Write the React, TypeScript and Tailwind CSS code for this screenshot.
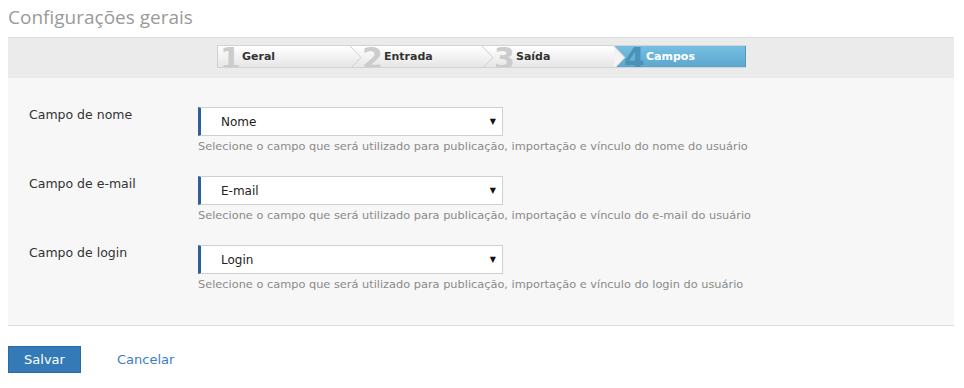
const steps = [
  { n: "1", label: "Geral" },
  { n: "2", label: "Entrada" },
  { n: "3", label: "Saída" },
];

const fields = [
  { label: "Campo de nome", value: "Nome", what: "nome" },
  { label: "Campo de e-mail", value: "E-mail", what: "e-mail" },
  { label: "Campo de login", value: "Login", what: "login" },
];

function Chevron({ active }: { active?: boolean }) {
  return (
    <div
      className={
        active
          ? "h-full w-[12px] shrink-0 bg-gradient-to-b from-[#76bfe2] to-[#5ca7cf]"
          : "h-full w-[12px] shrink-0 bg-gradient-to-b from-[#ffffff] to-[#e6e6e6]"
      }
    >
      <svg width="12" height="23" viewBox="0 0 12 23" className="block">
        {active && <polygon points="0,0 11,11.5 0,23" fill="#f3f3f3" />}
        <polyline points="0,0 11,11.5 0,23" fill="none" stroke="#cfcfcf" strokeWidth="1" />
      </svg>
    </div>
  );
}

export default function App() {
  return (
    <div className="w-[964px] h-[388px] bg-white pl-2 pr-[10px] font-['DejaVu_Sans',sans-serif]">
      <div className="h-[37px] pt-[4px] text-[19px] leading-[26px] text-[#9a9a9a] font-['Open_Sans',sans-serif]">
        Configurações gerais
      </div>

      <div className="border-t border-[#dcdcdc] bg-[#ebebeb] pt-[7px] pb-[10px] flex justify-start pl-[209px]">
        <div className="flex h-[23px] border-y border-[#d3d3d3] overflow-hidden">
          {steps.map((s, i) => (
            <div key={s.n} className="flex h-full">
              <div
                className={
                  "flex h-full items-start bg-gradient-to-b from-[#ffffff] to-[#e6e6e6] " +
                  (i === 0 ? "w-[133px] border-l border-[#cfcfcf] pl-[2px]" : "w-[120px]")
                }
              >
                <span className="w-[22px] text-[30px] font-bold leading-[30px] -mt-[2px] text-[#cccccc]">{s.n}</span>
                <span className="text-[11px] font-bold leading-[21px] text-[#333]">{s.label}</span>
              </div>
              <Chevron active={i === 2} />
            </div>
          ))}
          <div className="flex h-full w-[120px] items-start bg-gradient-to-b from-[#76bfe2] to-[#5ca7cf] border-r border-[#4f97bf]">
            <span className="w-[22px] text-[30px] font-bold leading-[30px] -mt-[2px] -ml-[2px] text-[#4b92b9]">4</span>
            <span className="text-[11px] font-bold leading-[21px] text-white">Campos</span>
          </div>
        </div>
      </div>

      <div className="bg-[#f7f7f7] border-b border-[#dedede] pt-[29px] pb-[34px] pl-[21px] flex flex-col gap-[23px]">
        {fields.map((f) => (
          <div key={f.label} className="flex">
            <div className="w-[169px] pt-[1px] text-[12.5px] leading-[14px] text-[#333]">{f.label}</div>
            <div className="flex flex-col">
              <div className="flex h-[29px] w-[305px] items-center justify-between border border-[#cfcfcf] border-l-[3px] border-l-[#2d6098] bg-white pl-[20px] pr-[6px]">
                <span className="text-[12px] text-[#222]">{f.value}</span>
                <span className="text-[8px] text-[#111]">▼</span>
              </div>
              <div className="mt-[3px] text-[11.35px] leading-[14px] text-[#8a8a8a]">
                Selecione o campo que será utilizado para publicação, importação e vínculo do {f.what} do usuário
              </div>
            </div>
          </div>
        ))}
      </div>

      <div className="flex items-center gap-[36px] pt-[20px]">
        <button className="h-[27px] w-[73px] border border-[#2c6aa3] bg-[#337ab7] text-[13px] text-white">
          Salvar
        </button>
        <span className="text-[13px] text-[#3d7cc6]">Cancelar</span>
      </div>
    </div>
  );
}
